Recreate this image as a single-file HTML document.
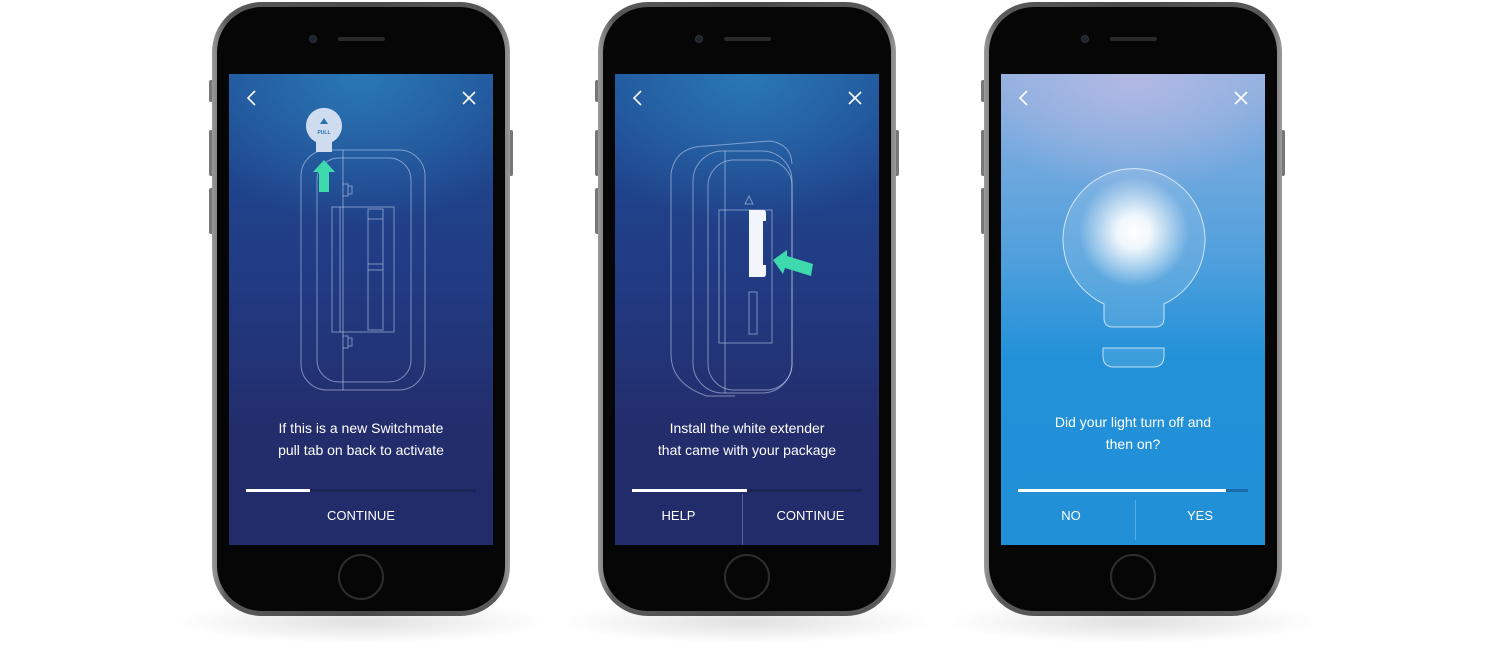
<!DOCTYPE html>
<html><head><meta charset="utf-8"><style>
*{margin:0;padding:0;box-sizing:border-box}
body{width:1500px;height:657px;background:#fff;position:relative;overflow:hidden;font-family:"Liberation Sans",sans-serif}
.ph{position:absolute;top:2px;width:298px;height:614px}
.shadow{position:absolute;left:-40px;right:-40px;top:598px;height:44px;background:radial-gradient(ellipse at center,rgba(0,0,0,.12),rgba(0,0,0,0) 70%)}
.btn{position:absolute;width:4px;background:#777;border-radius:2px}
.body{position:absolute;inset:0;border-radius:50px;background:linear-gradient(90deg,#9a9a9a,#5a5a5a 5%,#4a4a4a 50%,#5a5a5a 95%,#9a9a9a);}
.inner{position:absolute;left:5px;top:5px;right:5px;bottom:5px;border-radius:45px;background:#060606}
.cam{position:absolute;left:97px;top:33px;width:8px;height:8px;border-radius:50%;background:#1b2233;border:1px solid #333}
.spk{position:absolute;left:126px;top:35px;width:47px;height:4px;border-radius:2px;background:#2a2a2a}
.home{position:absolute;left:126px;top:552px;width:46px;height:46px;border-radius:50%;border:2px solid #2e2e2e}
.scr{position:absolute;left:17px;top:72px;width:264px;height:471px;overflow:hidden;color:#fff}
.s1{background:radial-gradient(ellipse 200px 150px at 50% 0%,#2a78b6,rgba(40,114,176,0) 100%),linear-gradient(#1f4d95,#213a82 45%,#232d6c 75%,#232c6a)}
.s3{background:radial-gradient(ellipse 170px 120px at 50% 0%,#b2b9e3,rgba(178,185,227,0) 100%),linear-gradient(#8fb0e0,#4e9fdc 40%,#2391d8 60%,#2190d7)}
.txt{position:absolute;left:0;width:264px;text-align:center;font-size:14px;line-height:22px}
.bar{position:absolute;left:17px;top:415px;width:230px;height:3px;background:rgba(20,30,70,.55)}
.bar i{display:block;height:3px;background:#fff}
.lbl{position:absolute;top:434px;font-size:13px;text-align:center}
.div{position:absolute;width:1px;background:rgba(255,255,255,.25)}
svg{position:absolute;left:0;top:0}
</style></head><body>

<div class="ph" style="left:212px">
<div class="shadow"></div>
<div class="btn" style="left:-3px;top:78px;height:22px"></div><div class="btn" style="left:-3px;top:128px;height:46px"></div><div class="btn" style="left:-3px;top:186px;height:46px"></div><div class="btn" style="right:-3px;top:128px;height:46px"></div>
<div class="body"></div><div class="inner"></div><div class="cam"></div><div class="spk"></div><div class="home"></div>
<div class="scr s1">
<svg width="264" height="471" fill="none" stroke="#fff" stroke-width="1.6">
<path d="M26 17 L19 24 L26 31"/><path d="M234 18 L246 30 M246 18 L234 30"/>
<g stroke="rgba(200,215,240,.55)" stroke-width="1">
<rect x="72" y="76" width="124" height="240" rx="26"/>
<rect x="88" y="84" width="94" height="224" rx="22"/>
<line x1="114" y1="76" x2="114" y2="316"/>
<rect x="103" y="133" width="62" height="125"/>
<line x1="111" y1="133" x2="111" y2="258"/>
<rect x="139" y="135" width="15" height="121"/>
<line x1="139" y1="145" x2="154" y2="145"/><line x1="139" y1="190" x2="154" y2="190"/><line x1="139" y1="196" x2="154" y2="196"/>
<path d="M114 110 h5 v12 h-5 M119 112 h4 v8 h-4 M114 262 h5 v12 h-5 M119 264 h4 v8 h-4"/>
</g>
<path d="M87 78 V68 A18 18 0 1 1 103 68 V78 Z" fill="#cfdcef" stroke="none"/>
<path d="M95 44 l4 6 h-8z" fill="#2a6fae" stroke="none"/>
<text x="95" y="60" font-size="5" fill="#2a6fae" stroke="none" text-anchor="middle" font-weight="bold">PULL</text>
<path d="M95 86 L106 98 H100 V118 H90 V98 H84 Z" fill="#3ed9ad" stroke="none"/>
</svg>
<div class="txt" style="top:343px">If this is a new Switchmate<br>pull tab on back to activate</div>
<div class="bar"><i style="width:64px"></i></div>
<div class="lbl" style="left:0;width:264px">CONTINUE</div>
</div></div>

<div class="ph" style="left:598px">
<div class="shadow"></div>
<div class="btn" style="left:-3px;top:78px;height:22px"></div><div class="btn" style="left:-3px;top:128px;height:46px"></div><div class="btn" style="left:-3px;top:186px;height:46px"></div><div class="btn" style="right:-3px;top:128px;height:46px"></div>
<div class="body"></div><div class="inner"></div><div class="cam"></div><div class="spk"></div><div class="home"></div>
<div class="scr s1">
<svg width="264" height="471" fill="none" stroke="#fff" stroke-width="1.6">
<path d="M26 17 L19 24 L26 31"/><path d="M234 18 L246 30 M246 18 L234 30"/>
<g stroke="rgba(200,215,240,.55)" stroke-width="1">
<path d="M92 72 Q60 72 56 100 V280 Q56 310 92 322 H120"/>
<path d="M92 72 L155 67 Q176 70 177 90"/>
<rect x="78" y="77" width="99" height="242" rx="30"/>
<rect x="93" y="86" width="84" height="230" rx="26"/>
<line x1="110" y1="77" x2="110" y2="319"/>
<rect x="104" y="136" width="53" height="133"/>
<path d="M130 130 l4 -8 l4 8z"/>
<rect x="134" y="218" width="8" height="42"/>
</g>
<path d="M134 136 h14 q3 0 3 3 v8 h-3 v44 h3 v9 q0 3 -3 3 h-14z" fill="#f2f5fb" stroke="none"/>
<path d="M158 186 L172 176 L172 182 L198 190 L196 202 L170 194 L168 200 Z" fill="#3ed9ad" stroke="none"/>
</svg>
<div class="txt" style="top:343px">Install the white extender<br>that came with your package</div>
<div class="bar"><i style="width:115px"></i></div>
<div class="div" style="left:127px;top:420px;height:51px"></div>
<div class="lbl" style="left:0;width:127px">HELP</div>
<div class="lbl" style="left:127px;width:137px">CONTINUE</div>
</div></div>

<div class="ph" style="left:984px">
<div class="shadow"></div>
<div class="btn" style="left:-3px;top:78px;height:22px"></div><div class="btn" style="left:-3px;top:128px;height:46px"></div><div class="btn" style="left:-3px;top:186px;height:46px"></div><div class="btn" style="right:-3px;top:128px;height:46px"></div>
<div class="body"></div><div class="inner"></div><div class="cam"></div><div class="spk"></div><div class="home"></div>
<div class="scr s3">
<svg width="264" height="471" fill="none" stroke="#fff" stroke-width="1.6">
<defs><radialGradient id="g" cx="0.5" cy="0.5" r="0.5"><stop offset="0" stop-color="#fff"/><stop offset=".3" stop-color="#fff" stop-opacity=".9"/><stop offset="1" stop-color="#fff" stop-opacity="0"/></radialGradient></defs>
<path d="M26 17 L19 24 L26 31"/><path d="M234 18 L246 30 M246 18 L234 30"/>
<path d="M103 230 A71 71 0 1 1 163 230 V244 Q163 253 154 253 H112 Q103 253 103 244 Z" fill="rgba(255,255,255,.12)" stroke="rgba(255,255,255,.7)" stroke-width="1"/>
<path d="M102 274 H163 V282 Q163 293 152 293 H113 Q102 293 102 282 Z" fill="rgba(255,255,255,.12)" stroke="rgba(255,255,255,.7)" stroke-width="1"/>
<circle cx="133" cy="158" r="55" fill="url(#g)" stroke="none"/>
</svg>
<div class="txt" style="top:337px">Did your light turn off and<br>then on?</div>
<div class="bar" style="background:rgba(20,70,130,.5)"><i style="width:208px"></i></div>
<div class="div" style="left:134px;top:426px;height:40px"></div>
<div class="lbl" style="left:0;width:140px">NO</div>
<div class="lbl" style="left:134px;width:130px">YES</div>
</div></div>

</body></html>
